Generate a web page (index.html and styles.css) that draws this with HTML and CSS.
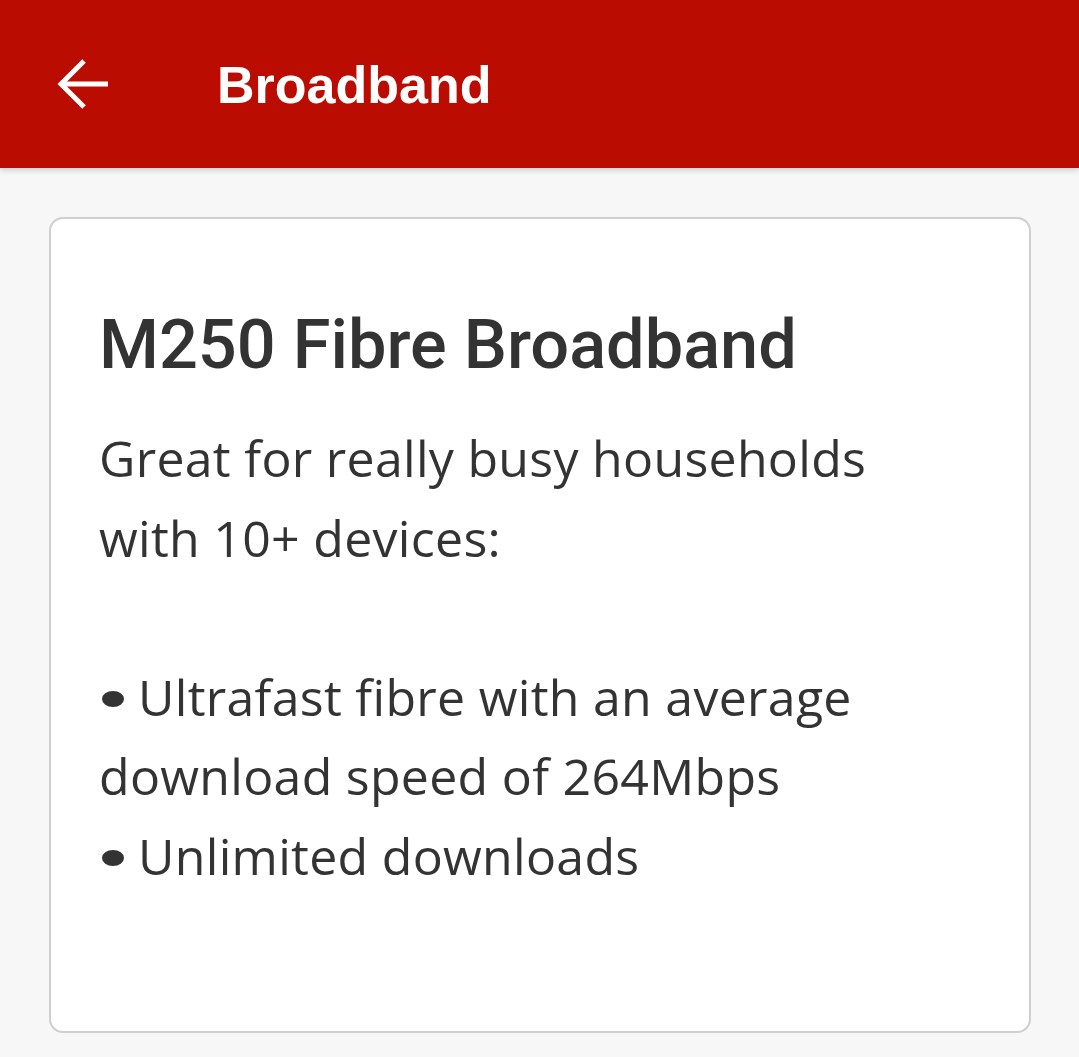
FILE: index.html
```html
<!DOCTYPE html>
<html lang="en">
<head>
<meta charset="utf-8">
<title>Broadband</title>
<link rel="stylesheet" href="styles.css">
</head>
<body>
<header class="topbar">
  <svg class="back" width="52" height="52" viewBox="0 0 52 52" aria-label="Back">
    <polyline points="27,3 4,26 27,49" fill="none" stroke="#fff" stroke-width="5" stroke-linejoin="miter"/>
    <line x1="4" y1="26" x2="51" y2="26" stroke="#fff" stroke-width="5"/>
  </svg>
  <h1 class="title">Broadband</h1>
</header>
<main class="content">
  <section class="card">
    <h2 class="card-title">M250 Fibre Broadband</h2>
    <p class="card-text">Great for really busy households<br>with 10+ devices:<br><br><span class="dot" aria-hidden="true"></span>Ultrafast fibre with an average<br>download speed of 264Mbps<br><span class="dot" aria-hidden="true"></span>Unlimited downloads</p>
  </section>
</main>
</body>
</html>
```

FILE: styles.css
```css
html, body {
  margin: 0;
  padding: 0;
}
body {
  background: #f7f7f7;
  font-family: "Open Sans", "Liberation Sans", Arial, sans-serif;
  color: #333333;
}
.topbar {
  height: 168px;
  background: #ba0c00;
  display: flex;
  align-items: center;
  padding-left: 57px;
  box-shadow: 0 2px 6px rgba(0, 0, 0, 0.18);
  position: relative;
}
.back {
  display: block;
  flex: none;
}
.title {
  margin: 0 0 0 108px;
  color: #ffffff;
  font-family: "Liberation Sans", Arial, sans-serif;
  font-size: 52px;
  font-weight: 700;
  line-height: 1;
  padding-top: 2px;
}
.content {
  padding: 49px 48px 0 49px;
}
.card {
  background: #ffffff;
  border: 2px solid #cfcfcf;
  border-radius: 14px;
  padding: 88px 48px 134px 48px;
}
.card-title {
  margin: 0;
  font-family: Roboto, "Liberation Sans", Arial, sans-serif;
  font-size: 68.5px;
  line-height: 76px;
  font-weight: 500;
  color: #333333;
}
.card-text {
  margin: 36px 0 0 0;
  font-size: 50px;
  line-height: 79.6px;
  letter-spacing: 0.3px;
  color: #333333;
}
.dot {
  display: inline-block;
  width: 22px;
  height: 16px;
  margin: 0 14px 0 3px;
  border-radius: 50%;
  background: #333333;
  vertical-align: 9px;
}
```
